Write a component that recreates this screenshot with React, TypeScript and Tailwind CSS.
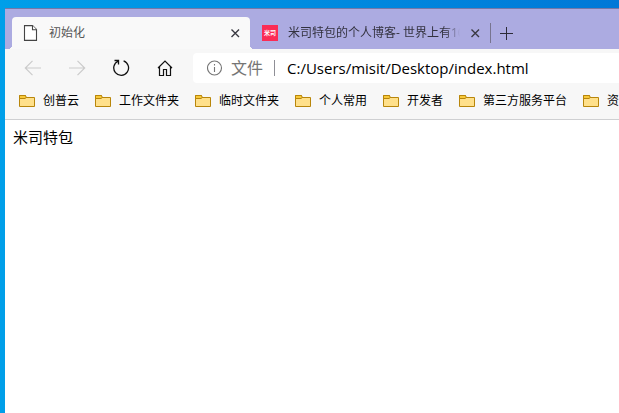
import React from "react";

const bookmarks: string[] = [
  "创普云",
  "工作文件夹",
  "临时文件夹",
  "个人常用",
  "开发者",
  "第三方服务平台",
  "资",
];

function CloseIcon() {
  return (
    <svg width="10" height="10" viewBox="0 0 10 10" fill="none" stroke="#3a3a42" strokeWidth="1.4">
      <path d="M1.500 1.500l7.500 7.500M9 1.500L1.500 9" />
    </svg>
  );
}

function PageIcon() {
  return (
    <svg width="16" height="16" viewBox="0 0 16 16" fill="#fff" stroke="#444" strokeWidth="1.1" className="shrink-0">
      <path d="M2.500 .6h8l4 4v10.800h-12z" />
      <path d="M10.500 .6v4.100h4.100" />
    </svg>
  );
}

function FolderIcon() {
  return (
    <svg width="16" height="12" viewBox="0 0 16 12" stroke="#b8860b" className="shrink-0">
      <path d="M.5 11.500V.5h6v2h9v9z" fill="#ffe08a" />
      <path d="M.5 3.500v-3h6l.8 2-1.300 1z" fill="#f8c93a" />
    </svg>
  );
}

function BackIcon() {
  return (
    <svg width="18" height="16" viewBox="0 0 18 16" fill="none" stroke="#cbcbcb" strokeWidth="1.2">
      <path d="M17 8H1.5M8.5 .8L1.3 8l7.2 7.2" />
    </svg>
  );
}

function ForwardIcon() {
  return (
    <svg width="18" height="16" viewBox="0 0 18 16" fill="none" stroke="#cbcbcb" strokeWidth="1.2">
      <path d="M1 8h15.500M9.500 .8L16.700 8l-7.200 7.200" />
    </svg>
  );
}

function ReloadIcon() {
  return (
    <svg width="18" height="18" viewBox="0 0 18 18" fill="none" stroke="#111" strokeWidth="1.3">
      <path d="M11.600 1.900A7.400 7.400 0 1 1 6.200 2.100" />
      <path d="M2.500 1.500h4v4" />
    </svg>
  );
}

function HomeIcon() {
  return (
    <svg width="16" height="16" viewBox="0 0 16 16" fill="none" stroke="#111" strokeWidth="1.2">
      <path d="M1 8L8 1l7 7M2.500 6.800v8.700h4V9.500h3v6h4V6.800" />
    </svg>
  );
}

function InfoIcon() {
  return (
    <svg width="16" height="16" viewBox="0 0 16 16" fill="none" stroke="#757575" strokeWidth="1.100" className="shrink-0">
      <circle cx="7.500" cy="8" r="7" />
      <path d="M7.500 7v5M7.500 4v1.500" />
    </svg>
  );
}

export default function App() {
  return (
    <div className="flex min-h-screen flex-col overflow-hidden bg-linear-to-r from-[#009fe9] to-[#0078d7] pt-2 pl-[5px] font-['Open_Sans','Noto_Sans_CJK_SC',sans-serif]">
      <div className="flex grow flex-col overflow-hidden border-t border-[#7478a8] bg-white">
        <header className="border-b border-[#cfd0d2] bg-[#f7f7f7]">
          <div className="flex h-10 items-end bg-[#acabe1] pl-[7px] text-xs">
            <div className="relative flex h-8 w-[238px] shrink-0 items-center rounded-t bg-[#f9f9f9] pr-2.5 pl-2.5">
              <span className="absolute bottom-0 -left-1 size-1 bg-[radial-gradient(circle_at_0_0,transparent_4px,#f9f9f9_4px)]" />
              <span className="absolute -right-1 bottom-0 size-1 bg-[radial-gradient(circle_at_100%_0,transparent_4px,#f9f9f9_4px)]" />
              <PageIcon />
              <span className="ml-[11px] grow text-[#555]">初始化</span>
              <button aria-label="关闭标签页" className="shrink-0">
                <CloseIcon />
              </button>
            </div>
            <div className="flex h-8 w-60 shrink-0 items-center pr-2.5 pl-3">
              <span className="flex size-4 shrink-0 items-center justify-center bg-[#fb2c55] text-[6px] leading-none font-bold text-white">
                米司
              </span>
              <span className="ml-2.5 w-[172px] shrink-0 overflow-hidden mask-r-from-92% whitespace-nowrap text-[#33323f]">
                米司特包的个人博客- 世界上有10
              </span>
              <button aria-label="关闭标签页" className="ml-auto shrink-0">
                <CloseIcon />
              </button>
            </div>
            <div className="flex h-8 items-center">
              <span className="h-5 w-px bg-[#77748f]" />
              <button aria-label="新建标签页" className="ml-[9px]">
                <svg width="13" height="13" viewBox="0 0 13 13" stroke="#2c2b38">
                  <path d="M6.5 0v13M0 6.500h13" />
                </svg>
              </button>
            </div>
          </div>

          <div className="flex items-center pt-[3px] pl-1.5">
            <button aria-label="后退" disabled className="flex h-8 w-11 shrink-0 items-center justify-center">
              <BackIcon />
            </button>
            <button aria-label="前进" disabled className="flex h-8 w-11 shrink-0 items-center justify-center">
              <ForwardIcon />
            </button>
            <button aria-label="刷新" className="flex h-8 w-11 shrink-0 items-center justify-center">
              <ReloadIcon />
            </button>
            <button aria-label="主页" className="flex h-8 w-11 shrink-0 items-center justify-center">
              <HomeIcon />
            </button>
            <div className="ml-1.5 flex h-[30px] grow items-center rounded-l bg-white pl-3.5 text-base">
              <InfoIcon />
              <label htmlFor="address" className="ml-2 shrink-0 leading-6 text-[#757575]">
                文件
              </label>
              <span className="ml-[11px] h-4 w-px shrink-0 bg-[#8f8f96]" />
              <input
                id="address"
                type="text"
                defaultValue="C:/Users/misit/Desktop/index.html"
                className="ml-3 h-6 min-w-0 grow bg-transparent text-[15px] text-black outline-none"
              />
            </div>
          </div>

          <nav className="flex h-[35px] items-center gap-4 overflow-hidden pb-px pl-3.5 text-xs text-black">
            {bookmarks.map((name) => (
              <a key={name} href="#" className="flex shrink-0 items-center gap-2 whitespace-nowrap">
                <FolderIcon />
                {name}
              </a>
            ))}
          </nav>
        </header>

        <main className="grow px-2 py-1.5 text-[15px] leading-[22px] text-black">米司特包</main>
      </div>
    </div>
  );
}
